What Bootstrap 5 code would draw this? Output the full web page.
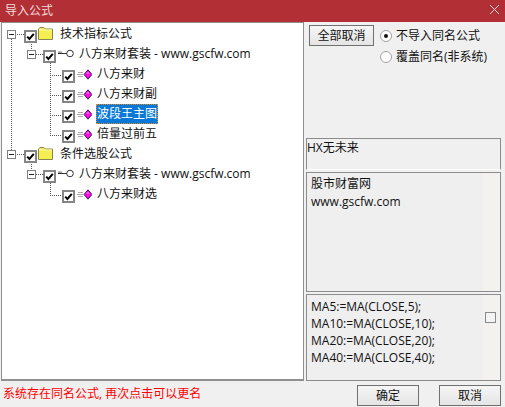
<!DOCTYPE html>
<html lang="zh">
<head>
<meta charset="utf-8">
<title>导入公式</title>
<link href="https://cdn.jsdelivr.net/npm/bootstrap@5.3.0/dist/css/bootstrap.min.css" rel="stylesheet">
<style>
html,body{height:100%;}
body{width:505px;height:407px;overflow:hidden;background:#f0f0f0;color:#111;font-family:"Open Sans","Noto Sans CJK SC",sans-serif;font-size:12px;line-height:18px;}
.dlg-title{height:22px;background:#b32f36;color:#f0dcdc;padding:2px 6px 0 5px;}
.dlg-main{height:359px;}
.tree-pane{width:303px;margin-left:1px;background:#fff;border:solid #8f8f8f;border-width:1px 1px 2px 1px;position:relative;}
.tree-lines{position:absolute;left:-2px;top:-23px;width:304px;height:300px;pointer-events:none;}
.tree-row{height:20px;}
.tree-row>*{flex:none;}
.lvl-0{padding-left:5px;}
.lvl-1{padding-left:25px;}
.lvl-2{padding-left:60px;}
.expander{width:9px;height:9px;margin-top:7px;margin-right:8px;border:1px solid #808080;background:#fff;position:relative;}
.expander::after{content:"";position:absolute;left:1px;right:1px;top:3px;height:1px;background:#222;}
.lvl-1 .expander{margin-right:7px;}
.tick{width:13px;height:13px;margin-top:7px;display:block;}
.ico-folder{width:15px;height:13px;margin:4px 0 0 1px;}
.ico-key{width:16px;height:9px;margin:6px 0 0 2px;}
.ico-gem{width:15px;height:11px;margin:6px 0 0 2px;}
.lbl{padding-top:2px;}
.lvl-0 .lbl{margin-left:7px;}
.lvl-1 .lbl{margin-left:5px;}
.lvl-2 .lbl{margin-left:5px;}
.lbl-on{background:#0a78d7;color:#fff;outline:1px dotted #e08a2a;outline-offset:-1px;margin:1px 0 0 4px!important;padding:1px;height:20px;width:62px;}
.side-pane{width:195px;margin-left:2px;}
.side-top{height:116px;padding:3px 0 0 3px;}
.btn-win{background:linear-gradient(#f6f6f6,#e4e4e4);border:1px solid #707070;border-radius:0;color:#111;font-size:12px;line-height:17px;padding:0;}
.btn-all{width:65px;height:21px;}
.choice{height:21px;}
.dot{width:12px;height:12px;border-radius:50%;border:1px solid #a0a0a0;background:#fff;margin-right:4px;position:relative;flex:none;}
.dot-on::after{content:"";position:absolute;left:3px;top:3px;width:4px;height:4px;border-radius:50%;background:#111;}
.choices{margin:0 0 0 6px;}
.info-box{border:1px solid #8c8c8c;background:#f0f0f0;}
.info-hx{height:32px;border-bottom-color:#fff;}
.info-desc{height:120px;margin-top:2px;padding:2px 0 0 4px;background:linear-gradient(to right,#efefef 176px,#f4f2ee 176px);}
.info-code{height:87px;margin-top:2px;padding:3px 0 0 4px;line-height:17px;background:linear-gradient(to right,#efefef 176px,#f4f2ee 176px);}
.mini-box{width:11px;height:11px;border:1px solid #8a8a8a;background:#f4f4f4;margin:14px 4px 0 0;flex:none;}
.dlg-foot{height:26px;}
.msg-red{color:#f00;padding:4px 0 0 3px;}
.btn-ok{width:62px;height:21px;margin:4px 0 0 0;}
.btn-no{width:62px;height:21px;margin:4px 4px 0 20px;}
.close-x{width:9px;height:9px;margin:3px 0 0 0;}
</style>
</head>
<body>
<svg width="0" height="0" class="position-absolute">
<defs>
<symbol id="tick" viewBox="0 0 13 13"><rect x="1" y="1" width="11" height="11" fill="#fff" stroke="#858585" stroke-width="2"/><path d="M3.200 6.600 5.400 9 9.800 3.800" fill="none" stroke="#000" stroke-width="2"/></symbol>
<symbol id="gem" viewBox="0 0 15 11"><path d="M1 3.500h5M0 5.500h6M1 7.500h5" stroke="#aaa" stroke-width="1"/><path d="M7 5.500 11 .8l4 4.700-4 4.700z" fill="#f010e0" stroke="#4a1460" stroke-width="1"/><path d="M9.500 4h2.500" stroke="#ff9cf0"/></symbol>
</defs>
</svg>
<div class="dlg-title d-flex justify-content-between">
<span>导入公式</span>
<svg class="close-x" viewBox="0 0 9 9"><path d="M0 0 9 9M9 0 0 9" stroke="#ecd6d6" stroke-width="1"/></svg>
</div>
<div class="dlg-main d-flex">
<div class="tree-pane">
<svg class="tree-lines" viewBox="0 0 304 300"><g stroke="#555" stroke-width="1" stroke-dasharray="1 1" fill="none"><path d="M11.500 39V150M17 34.500H24M31.500 44V52M36 54.500H43M50.500 63V135M50 75.500H62M50 95.500H62M50 115.500H62M50 135.500H62M17 154.500H24M31.500 164V172M36 174.500H43M50.500 183V195M50 195.500H62"/></g></svg>
<div class="tree-row d-flex lvl-0"><span class="expander"></span><svg class="tick"><use href="#tick"/></svg>
<svg class="ico-folder" viewBox="0 0 15 13"><path d="M.5 12.500V2L2 .5h4L7.500 2h7v10.500z" fill="#f5ee50" stroke="#8a8450"/><path d="M1 3h13" stroke="#fffbb0"/></svg><span class="lbl">技术指标公式</span></div>
<div class="tree-row d-flex lvl-1"><span class="expander"></span><svg class="tick"><use href="#tick"/></svg>
<svg class="ico-key" viewBox="0 0 16 9"><path d="M0 4.500H9M1 2.500V4M3 2.500V4" stroke="#333" fill="none"/><circle cx="12" cy="4.500" r="3.300" fill="#fff" stroke="#333"/></svg><span class="lbl">八方来财套装 - www.gscfw.com</span></div>
<div class="tree-row d-flex lvl-2"><svg class="tick"><use href="#tick"/></svg><svg class="ico-gem"><use href="#gem"/></svg><span class="lbl">八方来财</span></div>
<div class="tree-row d-flex lvl-2"><svg class="tick"><use href="#tick"/></svg><svg class="ico-gem"><use href="#gem"/></svg><span class="lbl">八方来财副</span></div>
<div class="tree-row d-flex lvl-2"><svg class="tick"><use href="#tick"/></svg><svg class="ico-gem"><use href="#gem"/></svg><span class="lbl lbl-on">波段王主图</span></div>
<div class="tree-row d-flex lvl-2"><svg class="tick"><use href="#tick"/></svg><svg class="ico-gem"><use href="#gem"/></svg><span class="lbl">倍量过前五</span></div>
<div class="tree-row d-flex lvl-0"><span class="expander"></span><svg class="tick"><use href="#tick"/></svg>
<svg class="ico-folder" viewBox="0 0 15 13"><path d="M.5 12.500V2L2 .5h4L7.500 2h7v10.500z" fill="#f5ee50" stroke="#8a8450"/><path d="M1 3h13" stroke="#fffbb0"/></svg><span class="lbl">条件选股公式</span></div>
<div class="tree-row d-flex lvl-1"><span class="expander"></span><svg class="tick"><use href="#tick"/></svg>
<svg class="ico-key" viewBox="0 0 16 9"><path d="M0 4.500H9M1 2.500V4M3 2.500V4" stroke="#333" fill="none"/><circle cx="12" cy="4.500" r="3.300" fill="#fff" stroke="#333"/></svg><span class="lbl">八方来财套装 - www.gscfw.com</span></div>
<div class="tree-row d-flex lvl-2"><svg class="tick"><use href="#tick"/></svg><svg class="ico-gem"><use href="#gem"/></svg><span class="lbl">八方来财选</span></div>
</div>
<div class="side-pane">
<div class="side-top d-flex">
<button type="button" class="btn btn-win btn-all">全部取消</button>
<div class="choices">
<div class="choice d-flex align-items-center"><span class="dot dot-on"></span>不导入同名公式</div>
<div class="choice d-flex align-items-center"><span class="dot"></span>覆盖同名(非系统)</div>
</div>
</div>
<div class="info-box info-hx">HX无未来</div>
<div class="info-box info-desc">股市财富网<br>www.gscfw.com</div>
<div class="info-box info-code d-flex justify-content-between">
<div>MA5:=MA(CLOSE,5);<br>MA10:=MA(CLOSE,10);<br>MA20:=MA(CLOSE,20);<br>MA40:=MA(CLOSE,40);</div>
<span class="mini-box"></span>
</div>
</div>
</div>
<div class="dlg-foot d-flex">
<div class="msg-red flex-grow-1">系统存在同名公式, 再次点击可以更名</div>
<button type="button" class="btn btn-win btn-ok">确定</button>
<button type="button" class="btn btn-win btn-no">取消</button>
</div>
<script src="https://cdn.jsdelivr.net/npm/bootstrap@5.3.0/dist/js/bootstrap.bundle.min.js"></script>
</body>
</html>
